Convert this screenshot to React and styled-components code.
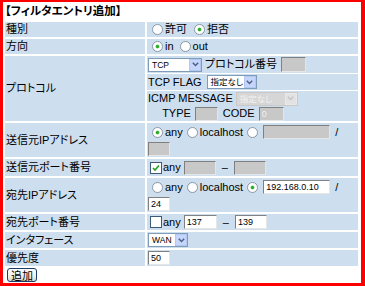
import React from 'react';
import styled, { createGlobalStyle, css } from 'styled-components';

const GlobalStyle = createGlobalStyle`
  html, body { margin: 0; padding: 0; background: #fff; }
  body {
    font-family: "Liberation Sans", "Noto Sans CJK JP", sans-serif;
    font-size: 11px;
    color: #000;
    font-feature-settings: "palt";
  }
`;

const BLUE = '#cddeee';

const Frame = styled.div`
  box-sizing: border-box;
  width: 365px;
  height: 286px;
  border-style: solid;
  border-color: #ff0000;
  border-width: 2px 4px 3px 3px;
  background: #fff;
  display: flex;
  flex-direction: column;
  align-items: flex-start;
  overflow: hidden;
`;

const Title = styled.div`
  height: 18px;
  line-height: 18px;
  padding-left: 2px;
  font-weight: bold;
  font-size: 11.5px;
`;

const FormTable = styled.table`
  border-collapse: separate;
  border-spacing: 2px;
  width: 357px;
  margin: 0;
`;

const Label = styled.td`
  width: 139px;
  padding: 0 0 0 1px;
  background: ${BLUE};
  vertical-align: middle;
  line-height: 13px;
  white-space: nowrap;
`;

const Value = styled.td`
  padding: ${p => (p.$flush ? '0' : '0 0 0 1px')};
  background: ${p => (p.$flush ? '#fff' : BLUE)};
  vertical-align: middle;
  line-height: 13px;
`;

const Line = styled.div`
  display: flex;
  align-items: center;
  height: ${p => p.$h || 15}px;
  white-space: nowrap;
`;

const SubStack = styled.div`
  display: flex;
  flex-direction: column;
  gap: 1px;
  background: #fff;
`;

const SubRow = styled.div`
  background: ${BLUE};
  padding: 0 0 0 1px;
`;

const Centered = styled.div`
  display: inline-flex;
  flex-direction: column;
  align-items: center;
`;

const Txt = styled.span`
  margin: ${p => p.$m || '0'};
`;

const RadioDot = styled.span`
  box-sizing: border-box;
  display: inline-block;
  width: 11px;
  height: 11px;
  border-radius: 50%;
  border: 1px solid #8a98a6;
  background: #fff;
  margin: 0 2px 0 4px;
  position: relative;
  flex: none;
  ${p => p.$checked && css`
    &::after {
      content: '';
      position: absolute;
      left: 3px;
      top: 3px;
      width: 3px;
      height: 3px;
      border-radius: 50%;
      background: #27a827;
      box-shadow: 0 0 0 0.5px #6fd06f;
    }
  `}
`;

const Radio = ({ checked, label, gap }) => (
  <>
    <RadioDot $checked={checked} role="radio" aria-checked={!!checked} />
    {label && <Txt $m={gap ? `0 ${gap}px 0 0` : '0'}>{label}</Txt>}
  </>
);

const CheckBox = styled.span`
  box-sizing: border-box;
  display: inline-flex;
  align-items: center;
  justify-content: center;
  width: 12px;
  height: 12px;
  border: 1px solid #3d5a78;
  background: #fff;
  margin: 0 1px 0 2px;
  flex: none;
`;

const Check = ({ checked }) => (
  <CheckBox role="checkbox" aria-checked={!!checked}>
    {checked && (
      <svg width="8" height="8" viewBox="0 0 8 8">
        <path d="M1 4 L3 6 L7 1.5" fill="none" stroke="#21a121" strokeWidth="1.6" />
      </svg>
    )}
  </CheckBox>
);

const TextBox = styled.input`
  box-sizing: border-box;
  width: ${p => p.$w}px;
  height: ${p => p.$h || 14}px;
  margin: ${p => p.$m || '0'};
  padding: 0 0 0 2px;
  border: 1px solid;
  border-color: #808080 #e6e6e6 #e6e6e6 #808080;
  background: ${p => (p.disabled ? '#c8c8c8' : '#fff')};
  font-family: "Liberation Sans", Arial, sans-serif;
  font-size: 9px;
  color: ${p => (p.disabled ? '#f0f0f0' : '#000')};
  outline: none;
`;

const SelectBox = styled.span`
  box-sizing: border-box;
  display: inline-flex;
  align-items: stretch;
  width: ${p => p.$w}px;
  height: 14px;
  margin: ${p => p.$m || '0'};
  border: 1px solid ${p => (p.$disabled ? '#c9c9c9' : '#7f9db9')};
  background: ${p => (p.$disabled ? '#d6d6d6' : '#fff')};
  font-family: "Liberation Sans", "Noto Sans CJK JP", sans-serif;
  font-size: 8.5px;
  color: ${p => (p.$disabled ? '#f2f2f2' : '#000')};
  flex: none;
`;

const SelectText = styled.span`
  flex: 1;
  padding-left: 3px;
  line-height: 12px;
  overflow: hidden;
`;

const SelectArrow = styled.span`
  box-sizing: border-box;
  width: 12px;
  display: flex;
  align-items: center;
  justify-content: center;
  background: ${p => (p.$disabled ? '#e2e2e2' : '#c5d5fb')};
  border: 1px solid ${p => (p.$disabled ? '#e8e8e8' : '#b3c7f3')};
`;

const Select = ({ w, value, disabled, m }) => (
  <SelectBox $w={w} $disabled={disabled} $m={m} role="combobox">
    <SelectText>{value}</SelectText>
    <SelectArrow $disabled={disabled}>
      <svg width="7" height="5" viewBox="0 0 7 5">
        <path d="M0.8 0.8 L3.5 3.5 L6.2 0.8" fill="none" stroke={disabled ? '#c4c4c4' : '#4d6185'} strokeWidth="1.5" />
      </svg>
    </SelectArrow>
  </SelectBox>
);

const AddButton = styled.button`
  box-sizing: border-box;
  height: 14px;
  margin: 0 0 0 4px;
  padding: 0 3px;
  border: 1px solid #1c3c6c;
  border-radius: 3px;
  background: linear-gradient(#ffffff, #f0efe8 60%, #d8d4c8);
  font-family: "Noto Sans CJK JP", sans-serif;
  font-size: 11px;
  line-height: 11px;
  color: #000;
`;

export default function App() {
  return (
    <>
      <GlobalStyle />
      <Frame>
        <Title>【フィルタエントリ追加】</Title>
        <FormTable>
          <tbody>
            <tr>
              <Label>種別</Label>
              <Value>
                <Line $h={15}>
                  <Radio label="許可" gap={3} />
                  <Radio checked label="拒否" />
                </Line>
              </Value>
            </tr>
            <tr>
              <Label>方向</Label>
              <Value>
                <Line $h={15}>
                  <Radio checked label="in" gap={2} />
                  <Radio label="out" />
                </Line>
              </Value>
            </tr>
            <tr>
              <Label>プロトコル</Label>
              <Value $flush>
                <SubStack>
                  <SubRow>
                    <Line $h={17}>
                      <Select w={54} value="TCP" />
                      <Txt $m="0 4px 0 3px">プロトコル番号</Txt>
                      <TextBox $w={25} $h={15} disabled />
                    </Line>
                  </SubRow>
                  <SubRow>
                    <Line $h={16}>
                      <Txt $m="0 5px 0 0">TCP FLAG</Txt>
                      <Select w={50} value="指定なし" />
                    </Line>
                  </SubRow>
                  <SubRow>
                    <Centered>
                      <Line $h={15}>
                        <Txt>ICMP MESSAGE</Txt>
                        <Select w={62} value="指定なし" disabled m="0 0 0 3px" />
                      </Line>
                      <Line $h={15}>
                        <Txt $m="0 4px 0 0">TYPE</Txt>
                        <TextBox $w={23} disabled />
                        <Txt $m="0 4px 0 5px">CODE</Txt>
                        <TextBox $w={25} disabled defaultValue="0" />
                      </Line>
                    </Centered>
                  </SubRow>
                </SubStack>
              </Value>
            </tr>
            <tr>
              <Label>送信元IPアドレス</Label>
              <Value>
                <Line $h={18}>
                  <Radio checked label="any" />
                  <Radio label="localhost" />
                  <Radio />
                  <TextBox $w={67} disabled $m="0 0 0 3px" />
                  <Txt $m="0 0 0 5px">/</Txt>
                </Line>
                <Line $h={16}>
                  <TextBox $w={22} $h={14} disabled />
                </Line>
              </Value>
            </tr>
            <tr>
              <Label>送信元ポート番号</Label>
              <Value>
                <Line $h={17}>
                  <Check checked />
                  <Txt $m="0 3px 0 0">any</Txt>
                  <TextBox $w={32} disabled />
                  <Txt $m="0 6px">–</Txt>
                  <TextBox $w={32} disabled />
                </Line>
              </Value>
            </tr>
            <tr>
              <Label>宛先IPアドレス</Label>
              <Value>
                <Line $h={18}>
                  <Radio label="any" />
                  <Radio label="localhost" />
                  <Radio checked />
                  <TextBox $w={67} defaultValue="192.168.0.10" $m="0 0 0 3px" />
                  <Txt $m="0 0 0 5px">/</Txt>
                </Line>
                <Line $h={16}>
                  <TextBox $w={22} defaultValue="24" />
                </Line>
              </Value>
            </tr>
            <tr>
              <Label>宛先ポート番号</Label>
              <Value>
                <Line $h={16}>
                  <Check />
                  <Txt $m="0 3px 0 0">any</Txt>
                  <TextBox $w={33} defaultValue="137" />
                  <Txt $m="0 6px">–</Txt>
                  <TextBox $w={32} defaultValue="139" />
                </Line>
              </Value>
            </tr>
            <tr>
              <Label>インタフェース</Label>
              <Value>
                <Line $h={16}>
                  <Select w={40} value="WAN" />
                </Line>
              </Value>
            </tr>
            <tr>
              <Label>優先度</Label>
              <Value>
                <Line $h={16}>
                  <TextBox $w={22} defaultValue="50" />
                </Line>
              </Value>
            </tr>
          </tbody>
        </FormTable>
        <AddButton type="button">追加</AddButton>
      </Frame>
    </>
  );
}
